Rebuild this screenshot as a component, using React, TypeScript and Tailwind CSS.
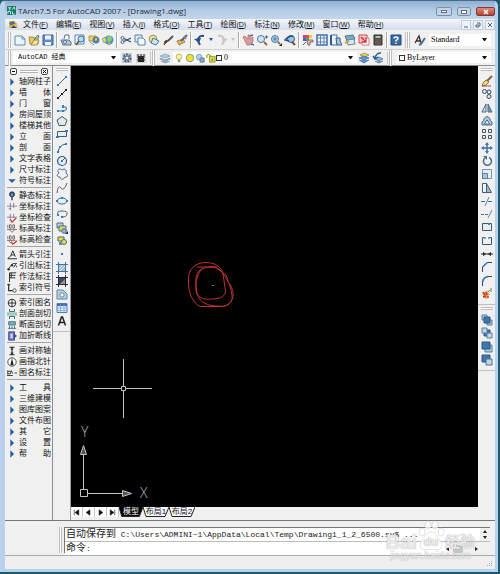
import type { ReactNode } from "react";

const NAVY = "#33475f";
const BLUE = "#2f7fc4";

const icons: Record<string, ReactNode> = {
  new: (
    <>
      <path d="M1 2h7l3 3v6H1z" fill="#eaf6f8" stroke="#5b92a8" />
      <path d="M8 2v3h3" fill="none" stroke="#5b92a8" />
    </>
  ),
  open: (
    <>
      <path d="M1 3h4l1 1h4v6H2z" fill="#e8c95c" stroke="#8b7a3a" strokeWidth=".8" />
      <path d="M3 11l3-5h5l-2 5z" fill="#f8e59a" stroke="#8b7a3a" strokeWidth=".8" />
      <path d="M6 6l4-5 1 3" fill="none" stroke="#3d74a8" />
    </>
  ),
  save: (
    <>
      <path d="M1 1h10v10H1z" fill="#5d8dc9" stroke="#3a639b" />
      <path d="M3 1.500h6v4H3zM3 8h6v3H3z" fill="#eef5fb" />
    </>
  ),
  print: (
    <>
      <path d="M4 5l1-4h4v4" fill="#fff" stroke="#55708f" />
      <path d="M1 6h8l2 2v3H3z" fill="#b9c5d2" stroke="#55708f" />
      <circle cx="5" cy="8" r="1.500" fill="#fff" stroke="#55708f" />
    </>
  ),
  preview: (
    <>
      <path d="M1 1h9v9H1z" fill="#edf5fb" stroke="#5a86ab" />
      <circle cx="7" cy="5" r="3" fill="#b8dcf0" stroke="#3d6f9b" />
      <path d="M5 7l-3 4" stroke="#6e5b3f" strokeWidth="2" />
    </>
  ),
  publish: (
    <>
      <path d="M1 2h7v5H1z" fill="#e9d25f" stroke="#8d7e3e" strokeWidth=".7" />
      <circle cx="8" cy="6" r="3.500" fill="#4d8bc4" />
      <path d="M6 4l3-1 1 3-3 2zM2 8l4 3" fill="#e7c443" stroke="#3c5c7d" strokeWidth=".7" />
    </>
  ),
  web: (
    <>
      <circle cx="7" cy="6" r="4.500" fill="#4b97c9" />
      <path d="M5 3l4-1 1 4-4 3z" fill="#8fce68" />
      <path d="M0 5l3-2 2 4-3 2zM6 9l4-1-3 3z" fill="#eed75e" stroke="#62779b" strokeWidth=".6" />
    </>
  ),
  cut: (
    <>
      <path d="M11 4L4 7.500M11 8L4 4.500" stroke={NAVY} strokeWidth="1.200" />
      <circle cx="2.500" cy="4" r="1.500" fill="none" stroke="#446991" />
      <circle cx="2.500" cy="8" r="1.500" fill="none" stroke="#446991" />
    </>
  ),
  copy: (
    <>
      <path d="M1 1h7v7H1z" fill="#d5eaf4" stroke="#5889a9" />
      <path d="M4 4h5l2 2v5H4z" fill="#f2fafc" stroke="#5889a9" />
    </>
  ),
  paste: (
    <>
      <circle cx="5" cy="5" r="3.800" fill="#f2e2a0" stroke="#a58b3f" />
      <path d="M5 4l6 3-3 4-5-2z" fill="#cde4f1" stroke="#4b7896" />
    </>
  ),
  brush: (
    <>
      <path d="M11 2L6 7" stroke="#555" strokeWidth="2" />
      <path d="M7 6l-5 5 1-4z" fill="#333" stroke="#7a4a2e" />
    </>
  ),
  block: (
    <>
      <path d="M1 7l6-2 2 3-6 3z" fill="#e9b648" stroke="#865f2d" strokeWidth=".7" />
      <path d="M5 7l6-6" stroke="#336da3" strokeWidth="2" />
      <path d="M8 2l2 3" stroke="#d66d2b" strokeWidth="1.500" />
    </>
  ),
  undo: (
    <>
      <path d="M10 2C5 1 2 5 6 11" fill="none" stroke="#25508c" strokeWidth="2" />
      <path d="M0 5l7-1-2 5z" fill="#25508c" />
    </>
  ),
  redo: (
    <>
      <path d="M2 2c5-1 8 3 4 9" fill="none" stroke="#c4c8cb" strokeWidth="2" />
      <path d="M12 5L6 4l1 5z" fill="#c4c8cb" />
    </>
  ),
  pan: (
    <>
      <path d="M1 3l2-1 3 3V1h2v4l3-2v5l-3 3H5z" fill="#d99b98" stroke="#a66a70" strokeWidth=".7" />
      <path d="M8 2l3-1M9 10l3 1" stroke="#3c6ea4" strokeWidth="1.500" />
    </>
  ),
  zoom: (
    <>
      <circle cx="5" cy="5" r="3.500" fill="#cce7f5" stroke="#507899" />
      <path d="M8 8l3 3" stroke="#8b6a45" strokeWidth="2" />
      <path d="M9 3h3M10.500 1.500v3" stroke="#355b8c" />
    </>
  ),
  zoomWin: (
    <>
      <circle cx="5" cy="5" r="3.500" fill="#a9d0e8" stroke="#507899" />
      <path d="M3.500 3.500h3v3h-3z" fill="#5d8fb8" />
      <path d="M8 8l2 2" stroke="#8b6a45" strokeWidth="2" />
      <path d="M9 12l3-3v3z" fill="#222" />
    </>
  ),
  zoomPrev: (
    <>
      <circle cx="7" cy="5" r="3.500" fill="#9bc4e0" stroke="#36608c" />
      <path d="M8 8l3 3" stroke="#684f36" strokeWidth="2" />
      <path d="M9 2Q4 2 1 6l4 1" fill="none" stroke="#25508c" strokeWidth="1.500" />
    </>
  ),
  props: (
    <>
      <path d="M1 1h3v3H1z" fill="#c94292" />
      <path d="M4 1h3v3H4z" fill="#e9504b" />
      <path d="M7 1h3v3H7z" fill="#e8ce37" />
      <path d="M1 4h3v3H1z" fill="#386ec1" />
      <path d="M4 4h3v3H4z" fill="#4cae69" />
      <path d="M5 6h6v2H8v3H6z" fill="#f0b6a6" stroke="#6c5368" strokeWidth=".8" />
      <path d="M1 11l3-3" stroke="#43617d" />
    </>
  ),
  grid: (
    <>
      <path d="M1 1h10v10H1z" fill="#f0f6fb" stroke="#426ea4" strokeWidth="1.500" />
      <path d="M4.500 1v10M8 1v10M1 4h10M1 8h10" stroke="#5e86b4" />
    </>
  ),
  palettes: (
    <>
      <path d="M1 1h6v10H1z" fill="#e6f1f8" stroke="#48739f" />
      <path d="M1 1v10" stroke="#355c8e" strokeWidth="2" />
      <path d="M6 4h4v3l2 4H7z" fill="#a9c8df" stroke="#3f5b80" />
    </>
  ),
  sheet: (
    <>
      <path d="M1 2l8-1 2 4-8 2z" fill="#75aaca" stroke="#547891" />
      <path d="M3 6l7-1 1 5-7 1z" fill="#d9e8ea" stroke="#678793" />
      <path d="M1 9l4-2" stroke="#d1a743" strokeWidth="2" />
    </>
  ),
  markup: (
    <>
      <path d="M1 1h8v8H1z" fill="#f3d2d0" stroke="#c94b50" />
      <path d="M4 4h7v7H4z" fill="#fff" stroke="#d37c7c" />
      <path d="M3 3l5 5M8 4v4H4" stroke="#d42c35" strokeWidth="1.300" fill="none" />
    </>
  ),
  calc: (
    <>
      <path d="M2 1h8v10H2z" fill="#4b4e50" stroke="#333" />
      <path d="M3.500 2h5v2h-5z" fill="#9fcf9b" />
      <path d="M3.500 6h5M3.500 8h5M3.500 10h5" stroke="#e26b61" strokeDasharray="1 1" />
    </>
  ),
  help: (
    <>
      <path d="M1 1h10v10H1z" fill="#356b9f" stroke="#234d79" />
      <path d="M4 4.500Q4 3 6 3t2 1.500Q8 5.500 6 6.500V7.500M6 8.500v1.500" fill="none" stroke="#fff" strokeWidth="1.400" />
    </>
  ),
  textStyle: (
    <>
      <path d="M1 9L5 2l2 7M2 7h4" fill="none" stroke="#333" strokeWidth="1.300" />
      <path d="M11 4L7 10l-2 1" fill="none" stroke="#4f7188" strokeWidth="2" />
    </>
  ),
  gear: (
    <>
      <path d="M1 1h10v10H1z" fill="#c4ced6" />
      <circle cx="6" cy="6" r="3.500" fill="none" stroke="#4d6071" strokeWidth="2" strokeDasharray="2 1" />
      <circle cx="6" cy="6" r="2" fill="#eef2f5" stroke="#4d6071" />
    </>
  ),
  workspace: (
    <>
      <path d="M1 2h10v9H1z" fill="#d5d5d5" />
      <path d="M3 4h6v6H3z" fill="#222" />
      <path d="M3 2v2M6 2v2M9 2v2M2 5h8M2 8h8" stroke="#333" />
    </>
  ),
  layers: (
    <>
      <path d="M1 4l5-2 5 2-5 2z" fill="#b9cfde" stroke="#7796ad" strokeWidth=".7" />
      <path d="M1 6l5 2 5-2v1L6 9.500 1 7zM2 9l4 2 5-2" fill="#9bb7cb" stroke="#7796ad" strokeWidth=".7" />
    </>
  ),
  layerMake: (
    <>
      <path d="M2 3l4-2 5 2-4 2z" fill="#f0d652" stroke="#8d7f34" strokeWidth=".7" />
      <path d="M1 6l5-2 5 2-5 2zM1 8l5 3 5-3" fill="#5d94c8" stroke="#3d6997" strokeWidth=".7" />
    </>
  ),
  layerPrev: (
    <>
      <path d="M3 7l4-2 4 2-4 2zM3 9l4 2 4-2" fill="#93b7d3" stroke="#4a739a" strokeWidth=".8" />
      <path d="M9 1Q4 1 3 6M1 4l2 3 3-2" fill="none" stroke="#305f98" strokeWidth="1.500" />
    </>
  ),
  bulb: (
    <>
      <circle cx="6" cy="4.500" r="3.300" fill="#fbf5a4" stroke="#b3a94e" />
      <path d="M4.500 8h3v3h-3z" fill="#8c9098" />
    </>
  ),
  sun: <circle cx="6" cy="6" r="4.500" fill="#f3dc35" stroke="#65947e" />,
  vpSun: (
    <>
      <circle cx="5" cy="5" r="3.500" fill="#b9d4e4" stroke="#6c98b6" />
      <path d="M6 6h5v5H6z" fill="#87aac3" stroke="#567c98" />
    </>
  ),
  lock: (
    <>
      <path d="M1 6V3q2-3 4 0v3" fill="none" stroke="#a1a72c" strokeWidth="1.500" />
      <path d="M4 4h7v7H4z" fill="#d4d83a" stroke="#8b9130" />
      <path d="M7.500 7v2" stroke="#555" />
    </>
  ),
  line: (
    <>
      <path d="M2 10l8-8" stroke="#4a6078" />
      <path d="M1 9h2v2H1zM9 1h2v2H9z" fill={BLUE} />
    </>
  ),
  xline: (
    <>
      <path d="M1 11L11 1" stroke="#222" />
      <path d="M1 9h2v2H1zM5 5h2v2H5zM9 1h2v2H9z" fill="#222" />
    </>
  ),
  pline: (
    <>
      <path d="M2 9h6q4-1 2-4H7" fill="none" stroke="#46698b" />
      <path d="M1 8h2v2H1zM6 8h2v2H6zM6 3h2v3H6z" fill={BLUE} />
    </>
  ),
  polygon: <path d="M6 1.500L11 5 9 10.500H3L1 5z" fill="#e1e9ed" stroke="#40596b" />,
  rect: (
    <>
      <path d="M1.500 3.500h9v5h-9z" fill="#e8eff4" stroke="#415b75" />
      <path d="M0 8h3v2H0zM9 2h3v2H9z" fill={BLUE} />
    </>
  ),
  arc: (
    <>
      <path d="M2 10Q3 3 10 2" fill="none" stroke="#445e77" />
      <path d="M1 9h2v2H1zM3 4h2v2H3zM9 1h2v2H9z" fill={BLUE} />
    </>
  ),
  circle: (
    <>
      <circle cx="6" cy="6" r="4.500" fill="#e5f1f9" stroke="#365a80" strokeWidth="1.200" />
      <path d="M6 6l3-3" stroke="#365a80" />
      <path d="M5 5h2v2H5z" fill={BLUE} />
    </>
  ),
  cloud: (
    <path
      d="M3 5C0 1 4 0 6 2c3-2 5 0 4 3 3 2 1 5-1 4-1 3-5 3-5 0-3 0-4-2-1-4z"
      fill="#edf2f5"
      stroke="#506a7d"
    />
  ),
  spline: <path d="M1 11Q2 2 5 6T11 1" fill="none" stroke="#59636d" />,
  ellipse: (
    <>
      <ellipse cx="6" cy="6" rx="4.500" ry="3" fill="#e6f0f7" stroke="#446582" />
      <path d="M0 5h2v2H0zM10 5h2v2h-2zM5 2h2v2H5z" fill={BLUE} />
    </>
  ),
  ellipseArc: (
    <>
      <path d="M2 7Q0 3 6 3t5 3q0 3-5 3" fill="none" stroke="#446582" />
      <path d="M1 6h2v2H1zM5 8h2v2H5z" fill={BLUE} />
    </>
  ),
  insert: (
    <>
      <path d="M1 1h6v5H1z" fill="#b7d0e0" stroke="#4c708b" />
      <path d="M3 4h7v5H3z" fill="#e8dc54" stroke="#4c708b" />
      <circle cx="8" cy="9" r="2.300" fill="#8fb9d8" stroke="#4c708b" />
      <path d="M9 12l3-3v3z" fill="#222" />
    </>
  ),
  makeBlock: (
    <>
      <path d="M2 2h6v4H2z" fill="#e8dc54" stroke="#4f6a61" />
      <circle cx="8" cy="7" r="2.500" fill="#e8dc54" stroke="#456f8c" />
      <path d="M3 7h3v3H3z" fill="#5b8db5" />
    </>
  ),
  point: <path d="M5 5h2v2H5z" fill={BLUE} />,
  hatch: (
    <>
      <path d="M2 2h8v8H2z" fill="#9fc0d8" />
      <path d="M0 2.500h12M0 9.500h12M2.500 0v12M9.500 0v12" stroke="#487398" />
      <path d="M3 7l4-4M4 9l5-5" stroke="#e1edf5" />
    </>
  ),
  gradient: (
    <>
      <path d="M2 2h8v8H2z" fill="#39466b" />
      <path d="M4 9l5-5v5z" fill="#a79a62" />
      <path d="M0 2.500h12M0 9.500h12M2.500 0v12M9.500 0v12" stroke="#252d3b" />
    </>
  ),
  region: (
    <>
      <path d="M1 2h6l4 4v5H1z" fill="#b8d3e3" stroke="#60849d" />
      <circle cx="6" cy="7" r="2.200" fill="#f3f8fb" stroke="#60849d" />
    </>
  ),
  table: (
    <>
      <path d="M1 1.500h10v9H1z" fill="#d9e9f8" stroke="#4c7fbd" />
      <path d="M1 3h10" stroke="#3f6fb2" strokeWidth="2" />
      <path d="M1 6h10M1 8.500h10M4.500 2v8M8 2v8" stroke="#7ba3d2" strokeWidth=".7" />
    </>
  ),
  mtext: <path d="M2.500 10.500L5.500 2h1l3 8.500M4 7.500h4" fill="none" stroke="#222" strokeWidth="1.500" />,
  erase: (
    <>
      <path d="M11 1L6 6" stroke="#8b5d39" strokeWidth="2" />
      <path d="M5 5l3 2-3 3-4 1 1-3z" fill="#edda72" stroke="#887744" />
      <path d="M1 11h9" stroke="#a8463f" />
    </>
  ),
  copyObj: (
    <>
      <circle cx="3.500" cy="3.500" r="2" fill="#dde9f1" stroke="#334d65" />
      <circle cx="8" cy="4" r="2" fill="#dde9f1" stroke="#334d65" />
      <circle cx="8" cy="8.500" r="2" fill="#dde9f1" stroke="#334d65" />
    </>
  ),
  mirror: (
    <>
      <path d="M5 2v8H1z" fill="#cadbe8" stroke="#536b80" />
      <path d="M7 2v8h4z" fill="#6c9cc5" stroke="#536b80" />
    </>
  ),
  offset: (
    <>
      <path d="M1 10V7q2-1 2-3 3-5 6 0 0 2 2 3v3z" fill="#a9c6dc" stroke="#4c6f8d" />
      <path d="M3 9q2-1 2-3 1-2 2 0 0 2 2 3z" fill="#f4f8fb" stroke="#4c6f8d" />
    </>
  ),
  array: <path d="M1.500 1.500h3v3h-3zM7.500 1.500h3v3h-3zM1.500 7.500h3v3h-3zM7.500 7.500h3v3h-3z" fill="#edf2f5" stroke="#46545f" />,
  move: (
    <>
      <path d="M6 2v8M2 6h8" stroke="#3e73a9" strokeWidth="1.500" />
      <path d="M6 0l2 3H4zM6 12l2-3H4zM0 6l3-2v4zM12 6L9 4v4z" fill="#3e73a9" />
    </>
  ),
  rotate: (
    <>
      <path d="M4 3a4 4 0 1 0 4-.500" fill="none" stroke="#466c91" strokeWidth="1.500" />
      <path d="M2 1h4v4z" fill="#466c91" />
    </>
  ),
  scale: (
    <>
      <path d="M1.500 1.500h9v9h-9z" fill="#e6eef4" stroke="#7897af" />
      <path d="M1.500 5.500h5v5h-5z" fill="#a9c6da" stroke="#5d8099" />
    </>
  ),
  stretch: (
    <>
      <path d="M1.500 1.500h4v9h-4z" fill="#eef2f5" stroke="#465c6e" />
      <path d="M5.500 1.500l5 9h-5z" fill="#9abbd5" stroke="#465c6e" />
    </>
  ),
  trim: (
    <>
      <path d="M0 6.500h5M7 6.500h5" stroke="#4c6e8d" strokeDasharray="4 1" />
      <path d="M4 11l4-9" stroke="#5b89b2" />
    </>
  ),
  extend: (
    <>
      <path d="M0 6.500h8" stroke="#4c6e8d" strokeDasharray="3 1" />
      <path d="M7 10l4-8" stroke="#5b89b2" />
    </>
  ),
  breakPt: (
    <>
      <path d="M1.500 2.500h9v7h-9z" fill="#e6edf2" stroke="#41576c" />
      <path d="M7 2h2v2H7z" fill={BLUE} />
    </>
  ),
  break: (
    <>
      <path d="M4 2.500H1.500v7h9v-7H8" fill="#edf2f5" stroke="#41576c" />
      <path d="M3 2h2v2H3zM7 2h2v2H7z" fill="#6ba0cc" />
    </>
  ),
  join: (
    <>
      <path d="M0 6h12" stroke="#222" />
      <path d="M2 4l3 2-3 2zM10 4L7 6l3 2z" fill="#222" />
    </>
  ),
  chamfer: (
    <>
      <path d="M1.500 11V6l5-4.500H11" fill="none" stroke="#33475f" />
      <path d="M1.500 6l5-4.500" stroke={BLUE} strokeWidth="1.500" />
    </>
  ),
  fillet: (
    <>
      <path d="M1.500 11V8Q2 2 8 1.500h3" fill="none" stroke="#33475f" />
      <path d="M1.500 7.500Q2 2 7 1.500" fill="none" stroke={BLUE} strokeWidth="1.500" />
    </>
  ),
  explode: (
    <>
      <path d="M1 4l2 1 3-3 1 3 2 1-2 2-1 3-3-1z" fill="#e6a147" />
      <path d="M2 4l2 3M5 4l1 3M2 9l3-1M6 9h2" stroke="#c33b31" strokeWidth="1.500" />
      <path d="M7 4l2-2M9 1h2M10 2v2" stroke="#777" />
    </>
  ),
  front: (
    <>
      <path d="M1 1h5v5H1zM6 6h5v5H6z" fill="#b0c8db" stroke="#5b7e9b" />
      <path d="M3 3h6v6H3z" fill="#3f76ab" stroke="#315b84" />
    </>
  ),
  back: (
    <>
      <path d="M3 3h6v6H3z" fill="#3f76ab" stroke="#315b84" />
      <path d="M1 1h5v5H1zM6 6h5v5H6z" fill="#c3d7e5" stroke="#5b7e9b" />
    </>
  ),
  above: (
    <>
      <path d="M4 4h7v7H4z" fill="#b0c8db" stroke="#5b7e9b" />
      <path d="M1 1h8v7H1z" fill="#3f76ab" stroke="#315b84" />
    </>
  ),
  under: (
    <>
      <path d="M1 1h8v7H1z" fill="#3f76ab" stroke="#315b84" />
      <path d="M5 5h6v6H5z" fill="#c3d7e5" stroke="#4a7398" />
    </>
  ),
  right: <path d="M4 1.500L8.500 6 4 10.500z" fill="#1f62a5" />,
  down: <path d="M1.500 4h9L6 8.500z" fill="#1f62a5" />,
  pin: (
    <>
      <circle cx="6" cy="4" r="3" fill="#2b5470" stroke="#1c364f" />
      <path d="M5 3h2v3H5z" fill="#64b4c4" />
      <path d="M6 7v4" stroke="#222" strokeWidth="1.500" />
    </>
  ),
  coord: <path d="M0 5h12M4 1v9M8 1v6M2 8h3" fill="none" stroke="#7d709f" />,
  coordCheck: (
    <>
      <path d="M0 5h12M4 1v8M8 1v5" stroke="#7d709f" />
      <path d="M4 8l2 3 5-5" fill="none" stroke="#d5363b" strokeWidth="1.500" />
    </>
  ),
  level: <path d="M1 1v4M3 1h2v4H3zM7 1h2v4H7zM0 6.500h12M3 7l3 3 3-3" fill="none" stroke="#6b6260" />,
  levelCheck: (
    <>
      <path d="M1 1v4M3 1h2v4H3zM7 1h2v4H7zM0 6.500h10M2 7l3 3" fill="none" stroke="#6b6260" />
      <path d="M5 8l2 3 5-4" fill="none" stroke="#d5363b" strokeWidth="1.500" />
    </>
  ),
  arrowNote: <path d="M4 8L7 1l3 7M5 6h4M12 10.500H1M3 8l-2 2.500" fill="none" stroke="#333" strokeWidth="1.200" />,
  leader: (
    <>
      <path d="M1 10l6-7h5M8 8l2-4 2 4" fill="none" stroke="#333" />
      <circle cx="2" cy="10" r="1.500" fill="#333" />
      <circle cx="6" cy="5" r="1.500" fill="#333" />
    </>
  ),
  method: <path d="M3 12V1h8M3 4h7M3 7h7M5 1v6" fill="none" stroke="#333" strokeWidth="1.200" />,
  indexSym: (
    <>
      <path d="M2 1v8h5" fill="none" stroke="#333" strokeWidth="1.500" />
      <circle cx="9" cy="9" r="2" fill="#fff" stroke="#333" />
      <path d="M0 2h4" stroke="#333" />
    </>
  ),
  indexName: (
    <>
      <circle cx="6" cy="6" r="4.500" fill="#fff" stroke="#333" strokeWidth="1.200" />
      <path d="M1 6h10M6 1v10" stroke="#333" strokeWidth="1.200" />
    </>
  ),
  section: (
    <>
      <path d="M0 4h12v4H0z" fill="#8bc6cc" />
      <path d="M3 0v3h6V0M3 12V9h6v3" fill="none" stroke="#426b7d" strokeWidth="1.200" />
      <path d="M2 6h8" stroke="#e1d66d" />
    </>
  ),
  cutSection: (
    <>
      <path d="M2 2h8v4H2z" fill="#70b4b9" stroke="#426b7d" />
      <path d="M3 11V7M6 11V7M9 11V7M1 10h10" stroke="#426b7d" />
    </>
  ),
  breakLine: (
    <>
      <path d="M2 1h7v10H2z" fill="#6873bc" stroke="#384288" />
      <path d="M4 3h3v6H4z" fill="#c8d0f4" />
      <path d="M12 6L8 3v6z" fill="#3c4796" />
    </>
  ),
  symmetry: <path d="M3 1.500h6M3 10.500h6M6 2v8M4.500 3.500h3M4.500 8.500h3" stroke="#222" strokeWidth="1.300" />,
  north: (
    <>
      <circle cx="6" cy="6" r="5" fill="#fff" stroke="#333" />
      <path d="M6 1l2 9H4z" fill="#222" />
    </>
  ),
  figName: <path d="M0 9h7M1 3v4M0 4h4M5 3l-1 4M5 3l2 4M9 6h3M0 7h4" fill="none" stroke="#444" strokeWidth="1.200" />,
};

function Icon({ name }: { name: string }) {
  return (
    <svg viewBox="0 0 12 12" className="size-3 shrink-0" aria-hidden="true">
      {icons[name]}
    </svg>
  );
}

function Tool({ name }: { name: string }) {
  return (
    <button type="button" aria-label={name} className="flex h-3 w-3.5 shrink-0 items-center justify-center">
      <Icon name={name} />
    </button>
  );
}

function Sep() {
  return <span className="mx-px h-4 w-0.5 shrink-0 border-r border-white bg-[#a9a9a9]" />;
}

function Handle() {
  return <span className="mx-px h-4 w-[3px] shrink-0 border-x border-[#bdbdbd] bg-white" />;
}

function More({ color }: { color: string }) {
  return (
    <button type="button" aria-label="more" className="flex w-2 shrink-0 justify-center">
      <svg viewBox="0 0 4 3" className="h-[3px] w-1">
        <path d="M0 0h4L2 3z" fill={color} />
      </svg>
    </button>
  );
}

function Caret() {
  return (
    <svg viewBox="0 0 5 3" className="pointer-events-none mr-1 h-[3px] w-[5px] shrink-0">
      <path d="M0 0h5L3 3H2z" fill="#111" />
    </svg>
  );
}

const selectClass = "min-w-0 flex-1 appearance-none bg-transparent text-black outline-none";
const serif = "font-['Liberation_Serif',serif] text-[8px]";
const mono = "font-['Liberation_Mono','Noto_Sans_CJK_SC',monospace] text-[7px]";

const menus = [
  ["文件", "F"],
  ["编辑", "E"],
  ["视图", "V"],
  ["插入", "I"],
  ["格式", "O"],
  ["工具", "T"],
  ["绘图", "D"],
  ["标注", "N"],
  ["修改", "M"],
  ["窗口", "W"],
  ["帮助", "H"],
];

const standardTools = [
  ["new", "open", "save"],
  ["print", "preview", "publish", "web"],
  ["cut", "copy", "paste", "brush", "block"],
];

const viewTools = [
  ["pan", "zoom", "zoomWin", "zoomPrev"],
  ["props", "grid", "palettes", "sheet", "markup", "calc"],
  ["help"],
];

const palette = [
  [
    ["right", "轴网柱子"],
    ["right", "墙 体"],
    ["right", "门 窗"],
    ["right", "房间屋顶"],
    ["right", "楼梯其他"],
    ["right", "立 面"],
    ["right", "剖 面"],
    ["right", "文字表格"],
    ["right", "尺寸标注"],
    ["down", "符号标注"],
  ],
  [
    ["pin", "静态标注"],
    ["coord", "坐标标注"],
    ["coordCheck", "坐标检查"],
    ["level", "标高标注"],
    ["levelCheck", "标高检查"],
  ],
  [
    ["arrowNote", "箭头引注"],
    ["leader", "引出标注"],
    ["method", "作法标注"],
    ["indexSym", "索引符号"],
  ],
  [
    ["indexName", "索引图名"],
    ["section", "剖面剖切"],
    ["cutSection", "断面剖切"],
    ["breakLine", "加折断线"],
  ],
  [
    ["symmetry", "画对称轴"],
    ["north", "画指北针"],
    ["figName", "图名标注"],
  ],
  [
    ["right", "工 具"],
    ["right", "三维建模"],
    ["right", "图库图案"],
    ["right", "文件布图"],
    ["right", "其 它"],
    ["right", "设 置"],
    ["right", "帮 助"],
  ],
];

const drawTools = [
  "line", "xline", "pline", "polygon", "rect", "arc", "circle", "cloud", "spline", "ellipse",
  "ellipseArc", "insert", "makeBlock", "point", "hatch", "gradient", "region", "table", "mtext",
];

const modifyTools = [
  "erase", "copyObj", "mirror", "offset", "array", "move", "rotate", "scale", "stretch", "trim",
  "extend", "breakPt", "break", "join", "chamfer", "fillet", "explode",
];

const orderTools = ["front", "back", "above", "under"];

function TitleBar() {
  return (
    <header className="flex h-[18px] items-start bg-linear-to-b from-[#8eb0d2] via-[#b3cbe4] to-[#c3d6ea] pl-0.5">
      <svg viewBox="0 0 10 10" className="mt-[5px] size-[9px]" aria-hidden="true">
        <path d="M0 0h10v10H0z" fill="#17766b" />
        <path d="M1 2h4M3 2v3M6 4l2-3 1 3M1 9V6h3v3M6 6v3h3" fill="none" stroke="#d8f0ea" />
      </svg>
      <h1 className="mt-1 ml-0.5 flex-1 font-['Open_Sans',sans-serif] text-[8px] leading-[11px] whitespace-nowrap text-[#222c3a]">
        TArch7.5 For AutoCAD 2007 - [Drawing1.dwg]
      </h1>
      <div className="mt-1.5 flex gap-[5px]">
        <button type="button" aria-label="minimize" className="flex h-[9px] w-4 items-center justify-center rounded-xs border border-[#7c8fa8] bg-[#c3d2e4]">
          <span className="h-[3px] w-1.5 border border-[#5f6f84] bg-white" />
        </button>
        <button type="button" aria-label="maximize" className="flex h-[9px] w-3.5 items-center justify-center rounded-xs border border-[#7c8fa8] bg-[#c3d2e4]">
          <span className="h-1 w-1.5 border border-[#5f6f84] bg-white" />
        </button>
        <button type="button" aria-label="close" className="flex h-[9px] w-[19px] items-center justify-center rounded-xs border border-[#7c3a3a] bg-linear-to-b from-[#d88d7f] to-[#bd3c29]">
          <svg viewBox="0 0 6 6" className="size-1.5">
            <path d="M1 1l4 4M5 1L1 5" stroke="#fff" strokeWidth="1.500" />
          </svg>
        </button>
      </div>
    </header>
  );
}

function MenuBar() {
  return (
    <nav className="flex h-[11px] items-center bg-linear-to-b from-[#f3f6fb] to-[#d5dded] pl-1">
      <svg viewBox="0 0 10 10" className="mr-[5px] size-[9px]" aria-hidden="true">
        <path d="M0 1h6l3 3v5H0z" fill="#e3b83e" />
        <path d="M0 3l5-2 2 3-5 2z" fill="#456e9e" />
        <path d="M2 9l3-3 4 3z" fill="#2d4b77" />
      </svg>
      <div className="flex flex-1 gap-2">
        {menus.map(([label, key]) => (
          <button key={key} type="button" className="flex items-center text-[8px] leading-[11px] whitespace-nowrap text-[#111]">
            {label}
            <span className="text-[7px]">
              (<u>{key}</u>)
            </span>
          </button>
        ))}
      </div>
      <div className="flex gap-0.5">
        {["M1 5h4", "M1 3h3v2H1zM2 1h3v3", "M1 1l4 4M5 1L1 5"].map((d, i) => (
          <button
            key={d}
            type="button"
            aria-label={["minimize drawing", "restore drawing", "close drawing"][i]}
            className="flex h-2.5 w-2.5 items-center justify-center border border-[#c2cbdb] bg-[#eef2f9]"
          >
            <svg viewBox="0 0 6 6" className="size-1.5">
              <path d={d} fill="none" stroke="#51637e" />
            </svg>
          </button>
        ))}
      </div>
    </nav>
  );
}

function Toolbars() {
  return (
    <div className="border-b border-[#8c8c8c] bg-[#f0f0f0]">
      <div className="flex h-5 items-center border-b border-[#d2d2d2] pl-0.5">
        <Handle />
        <span className="w-px" />
        {standardTools.map((group) => (
          <div key={group[0]} className="flex items-center">
            {group.map((name) => (
              <Tool key={name} name={name} />
            ))}
            <Sep />
          </div>
        ))}
        <Tool name="undo" />
        <More color="#25508c" />
        <Tool name="redo" />
        <More color="#c4c8cb" />
        <Sep />
        {viewTools.map((group, i) => (
          <div key={group[0]} className="flex items-center">
            {i > 0 && <Sep />}
            {group.map((name) => (
              <Tool key={name} name={name} />
            ))}
          </div>
        ))}
        <span className="ml-0.5 h-4 w-px bg-[#c8c8c8]" />
        <Handle />
        <span className="w-0.5" />
        <Tool name="textStyle" />
        <label className="mr-1 ml-0.5 flex h-3 flex-1 items-center bg-white pl-0.5">
          <select aria-label="text style" className={`${selectClass} ${serif}`}>
            <option>Standard</option>
          </select>
          <Caret />
        </label>
      </div>
      <div className="flex h-[15px] items-center pl-0.5">
        <Handle />
        <label className="ml-px flex h-[11px] w-[107px] items-center bg-white pl-[5px]">
          <select aria-label="workspace" className={`${selectClass} ${mono}`}>
            <option>AutoCAD 经典</option>
          </select>
          <Caret />
        </label>
        <Tool name="gear" />
        <Tool name="workspace" />
        <span className="ml-0.5 h-3 w-px bg-[#c8c8c8]" />
        <Handle />
        <span className="w-0.5" />
        <Tool name="layers" />
        <label className="ml-px flex h-[11px] w-[184px] items-center bg-white pl-px">
          <span className="flex items-center">
            <span className="flex w-[42px] justify-between">
              <svg viewBox="0 0 12 12" className="size-2.5">{icons.bulb}</svg>
              <svg viewBox="0 0 12 12" className="size-2.5">{icons.sun}</svg>
              <svg viewBox="0 0 12 12" className="size-2.5">{icons.vpSun}</svg>
              <svg viewBox="0 0 12 12" className="size-2.5">{icons.lock}</svg>
            </span>
            <span className="mr-0.5 size-1.5 border border-[#333] bg-white" />
          </span>
          <select aria-label="layer" className={`${selectClass} ${serif}`}>
            <option>0</option>
          </select>
          <Caret />
        </label>
        <Tool name="layerMake" />
        <Tool name="layerPrev" />
        <span className="ml-0.5 h-3 w-px bg-[#c8c8c8]" />
        <Handle />
        <label className="mr-1 ml-1 flex h-[11px] flex-1 items-center bg-white pl-0.5">
          <span className="mr-0.5 size-1.5 border border-[#333]" />
          <select aria-label="color" className={`${selectClass} ${serif}`}>
            <option>ByLayer</option>
          </select>
          <Caret />
        </label>
      </div>
    </div>
  );
}

function Palette() {
  return (
    <aside className="flex w-12 shrink-0 flex-col border-r border-[#8f8f8f] bg-[#f0f0f0] pr-px pl-0.5">
      <div className="flex h-2.5 items-center gap-[3px] pl-[3px]">
        <button type="button" aria-label="collapse" className="flex size-[7px] items-center justify-center rounded-xs border border-[#444] bg-white">
          <span className="h-px w-[3px] bg-black" />
        </button>
        <span className="h-[3px] w-[18px] border-y border-[#b5b5b5] bg-white" />
        <button type="button" aria-label="close palette" className="flex size-[7px] items-center justify-center rounded-xs border border-[#444] bg-white">
          <svg viewBox="0 0 5 5" className="size-[5px]">
            <path d="M1 1l3 3M4 1L1 4" stroke="#000" />
          </svg>
        </button>
      </div>
      {palette.map((group, i) => (
        <div key={group[0][1]}>
          {i > 0 && <hr className="mt-px mb-0.5 border-t border-[#a5a5a5]" />}
          {group.map(([icon, label]) => (
            <button key={label} type="button" className="flex h-[11px] w-full items-center">
              <svg viewBox="0 0 12 12" className="size-2.5 shrink-0">
                {icons[icon]}
              </svg>
              <span className="ml-0.5 flex w-8 justify-between text-[8px] leading-[11px] text-[#111]">
                {label.split(" ").map((part) => (
                  <span key={part}>{part}</span>
                ))}
              </span>
            </button>
          ))}
        </div>
      ))}
    </aside>
  );
}

function ToolColumn({ names, className }: { names: string[]; className: string }) {
  return (
    <div className={`flex flex-col items-center border-b border-[#c0c0c0] ${className}`}>
      <span className="mt-0.5 mb-1 h-[3px] w-3 shrink-0 border-y border-[#bdbdbd] bg-white" />
      <div className="flex flex-1 flex-col justify-between pb-1">
        {names.map((name) => (
          <Tool key={name} name={name} />
        ))}
      </div>
    </div>
  );
}

function DrawingArea() {
  return (
    <main className="relative flex-1 bg-black">
      <svg className="absolute size-full" fill="none" stroke="#c4c4c4">
        <path d="M52.500 293v27M52.500 325v27M22 322.500h28M55 322.500h26M50.500 320.500h4v4h-4z" />
        <path d="M9.500 423.500h7v7h-7zM12.500 423v-35M17 427.500h34" />
        <path d="M9.500 388.500l3-9 3 9zM51.500 424.500l9 3-9 3z" fill="#555" />
        <g stroke="#c03034">
          <path d="M117.500 214C117 203 124 197 134 196.500c10 0 16 4 18 11 5 9 11 14 10 23-2 8-7 10-13 10h-20c-8-4-12-15-11.500-26.500z" />
          <path d="M126 201h18l11 8c3 9 7 17 6 25-3 6-8 7-14 6-10 0-18-3-21-12-1-9-3-17 2-23q5-5 18-4" />
          <path d="M132 202c-6 5-8 15-7 23 2 7 8 9 15 8 9 0 14-2 14.500-8L152 208c-2-5-6-7-14-7" />
        </g>
        <path d="M141 219.500h2" stroke="#777" />
        <g stroke="none" fill="#bdbdbd" className="font-['Open_Sans',sans-serif] text-[14px] font-light">
          <text x="10" y="371">Y</text>
          <text x="69" y="432">X</text>
        </g>
      </svg>
    </main>
  );
}

function LayoutTabs() {
  return (
    <div className="flex h-[13px] items-start bg-[#f0f0f0]">
      {["M3 2v6M8 2v6L4 5z", "M7 2v6L3 5z", "M4 2v6l4-3z", "M3 2v6l4-3zM8 2v6"].map((d) => (
        <button key={d} type="button" aria-label="scroll tabs" className="h-2.5 w-3 border-r border-[#c8c8c8] bg-white">
          <svg viewBox="0 0 11 10" className="h-[9px] w-full">
            <path d={d} fill="#111" stroke="#111" strokeWidth=".7" />
          </svg>
        </button>
      ))}
      {["模型", "布局1", "布局2"].map((label, i) => (
        <button
          key={label}
          type="button"
          className={`relative h-2.5 text-[8px] leading-[10px] ${i === 0 ? "w-6 text-white" : "w-[26px] text-[#111]"}`}
        >
          <svg viewBox="0 0 26 10" preserveAspectRatio="none" className="absolute inset-0 size-full">
            <path d="M0 0l3 9.500h19L26 0" fill={i === 0 ? "#000" : "#fafafa"} stroke="#222" />
          </svg>
          <span className="relative">{label}</span>
        </button>
      ))}
    </div>
  );
}

function Watermark() {
  return (
    <div className="pointer-events-none absolute right-5 bottom-[7px] flex flex-col items-center text-white/80 [text-shadow:0_0_1px_#888]">
      <p className="flex items-center leading-4 font-bold">
        <span className="text-[20px]">Bai</span>
        <span className="relative flex w-7 justify-center text-[12px]">
          <svg
            viewBox="0 0 28 32"
            className="absolute bottom-[-2px] left-0 h-8 w-7"
            fill="#fff"
            fillOpacity=".75"
            stroke="#ccc"
            strokeWidth=".6"
          >
            <ellipse cx="5" cy="12" rx="3" ry="4" />
            <ellipse cx="11" cy="5" rx="3" ry="4" />
            <ellipse cx="18" cy="5" rx="3" ry="4" />
            <ellipse cx="24" cy="12" rx="3" ry="4" />
            <path d="M14 12c5 0 6 5 9 8 4 5 1 10-3 10-4-1-8-1-12 0-4 0-7-5-3-10 3-3 4-8 9-8z" />
          </svg>
          <span className="relative">du</span>
        </span>
        <span className="text-[15px]">经验</span>
      </p>
      <p className="text-[10px] leading-[12px]">jingyan.baidu.com</p>
    </div>
  );
}

function CommandPanel() {
  return (
    <section className="relative border-t border-[#777] bg-[#f0f0f0]">
      <div className="flex h-[35px] border-b border-[#aaa] pt-1.5 pr-[5px] pb-0.5 pl-[54px]">
        <span className="mr-0.5 w-[3px] border-x border-[#bdbdbd] bg-white" />
        <div className="flex min-w-0 flex-1 flex-col border-t border-l border-[#777] font-['Liberation_Mono','Noto_Sans_CJK_SC',monospace] text-[10px] text-[#222]">
          <div className="flex flex-1 items-center border-b border-[#bbb] bg-white pl-px">
            <output className="flex-1 overflow-hidden leading-[13px] whitespace-pre">
              自动保存到<span className="text-[8px]"> C:\Users\ADMINI~1\AppData\Local\Temp\Drawing1_1_2_6500.sv$ ...</span>
            </output>
            <span className="flex h-full w-2.5 flex-col items-center justify-around bg-[#f0f0f0]">
              <svg viewBox="0 0 4 3" className="h-[3px] w-1">
                <path d="M0 3h4L2 0z" fill="#222" />
              </svg>
              <svg viewBox="0 0 4 3" className="h-[3px] w-1">
                <path d="M0 0h4L2 3z" fill="#222" />
              </svg>
            </span>
          </div>
          <div className="flex flex-1 items-center bg-white pl-px">
            <label htmlFor="command" className="leading-[13px]">
              命令<span className="text-[8px]">:</span>
            </label>
            <input id="command" className="h-3 min-w-0 flex-1 bg-transparent outline-none" />
            <span className="flex h-full items-center bg-[#f0f0f0] pr-3">
              <svg viewBox="0 0 3 4" className="h-1 w-[3px]">
                <path d="M3 0v4L0 2z" fill="#222" />
              </svg>
              <span className="mr-3 ml-1 h-2 w-2.5 rounded-xs bg-[#c5c5c8]" />
              <svg viewBox="0 0 3 4" className="h-1 w-[3px]">
                <path d="M0 0v4l3-2z" fill="#222" />
              </svg>
            </span>
          </div>
        </div>
      </div>
      <footer className="flex h-[13px] items-end justify-end bg-[#f0eeee] p-0.5">
        <svg viewBox="0 0 6 6" className="size-1.5">
          <path d="M4 0h1v1H4zM2 2h1v1H2zM4 2h1v1H4zM0 4h1v1H0zM2 4h1v1H2zM4 4h1v1H4z" fill="#aaa" />
        </svg>
      </footer>
      <Watermark />
    </section>
  );
}

export default function App() {
  return (
    <div className="flex min-h-screen flex-col bg-[#1b5b6e] pr-0.5 pb-0.5 font-['Liberation_Sans','Noto_Sans_CJK_SC',sans-serif]">
      <div className="flex flex-1 flex-col rounded-t-md border-x-3 border-t border-b-3 border-x-[#b9d1ea] border-t-[#4a6a86] border-b-[#b5d3ea] bg-[#b9d1ea] pl-0.5">
        <TitleBar />
        <MenuBar />
        <Toolbars />
        <div className="flex flex-1 bg-[#f0f0f0]">
          <Palette />
          <div className="w-[18px] shrink-0 border-r border-[#9a9a9a]">
            <ToolColumn names={drawTools} className="h-[266px]" />
          </div>
          <div className="flex min-w-0 flex-1 flex-col">
            <DrawingArea />
            <LayoutTabs />
          </div>
          <div className="w-[17px] shrink-0">
            <ToolColumn names={modifyTools} className="h-[239px]" />
            <ToolColumn names={orderTools} className="h-[66px]" />
          </div>
        </div>
        <CommandPanel />
      </div>
    </div>
  );
}
